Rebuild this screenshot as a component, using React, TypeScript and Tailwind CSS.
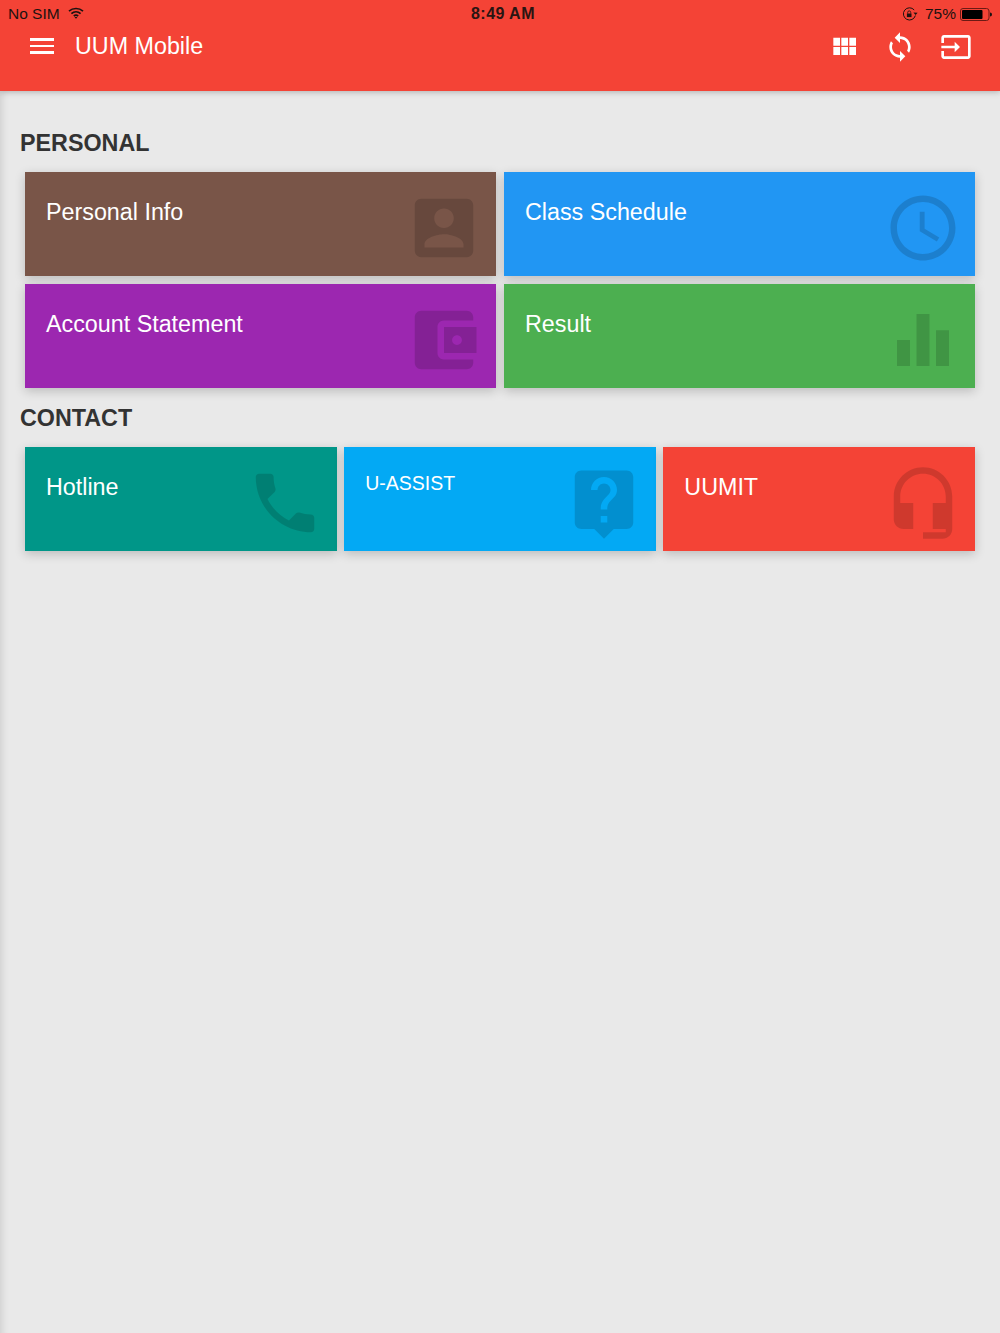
const P = {
  box: "M3 5v14c0 1.1.89 2 2 2h14c1.1 0 2-.9 2-2V5c0-1.1-.9-2-2-2H5c-1.11 0-2 .9-2 2zm12 4c0 1.66-1.34 3-3 3s-3-1.34-3-3 1.34-3 3-3 3 1.34 3 3zm-9 8c0-2 4-3.1 6-3.1s6 1.1 6 3.1v1H6v-1z",
  clock: "M11.99 2C6.47 2 2 6.48 2 12s4.47 10 9.99 10C17.52 22 22 17.52 22 12S17.52 2 11.99 2zM12 20c-4.42 0-8-3.58-8-8s3.58-8 8-8 8 3.58 8 8-3.58 8-8 8zm.5-13H11v6l5.25 3.15.75-1.23-4.5-2.67z",
  wallet: "M21 18v1c0 1.1-.9 2-2 2H5c-1.11 0-2-.9-2-2V5c0-1.1.89-2 2-2h14c1.1 0 2 .9 2 2v1h-9c-1.11 0-2 .9-2 2v8c0 1.1.89 2 2 2h9zm-9-2h10V8H12v8zm4-2.5c-.83 0-1.5-.67-1.5-1.5s.67-1.5 1.5-1.5 1.5.67 1.5 1.5-.67 1.5-1.5 1.5z",
  bars: "M10 20h4V4h-4v16zm-6 0h4v-8H4v8zM16 9v11h4V9h-4z",
  phone: "M6.62 10.79c1.44 2.83 3.76 5.14 6.59 6.59l2.2-2.2c.27-.27.67-.36 1.02-.24 1.12.37 2.33.57 3.57.57.55 0 1 .45 1 1V20c0 .55-.45 1-1 1-9.39 0-17-7.61-17-17 0-.55.45-1 1-1h3.5c.55 0 1 .45 1 1 0 1.25.2 2.45.57 3.57.11.35.03.74-.25 1.02l-2.2 2.2z",
  help: "M19 2H5c-1.11 0-2 .9-2 2v14c0 1.1.89 2 2 2h4l3 3 3-3h4c1.1 0 2-.9 2-2V4c0-1.1-.9-2-2-2zm-6 16h-2v-2h2v2zm2.07-7.75l-.9.92C13.45 11.9 13 12.5 13 14h-2v-.5c0-1.1.45-2.1 1.17-2.83l1.24-1.26c.37-.36.59-.86.59-1.41 0-1.1-.9-2-2-2s-2 .9-2 2H8c0-2.21 1.79-4 4-4s4 1.79 4 4c0 .88-.36 1.68-.93 2.25z",
  headset: "M12 1c-4.97 0-9 4.03-9 9v7c0 1.66 1.34 3 3 3h3v-8H5v-2c0-3.87 3.13-7 7-7s7 3.13 7 7v2h-4v8h4v1h-7v2h6c1.66 0 3-1.34 3-3V10c0-4.97-4.03-9-9-9z",
  apps: "M4 11h5V5H4v6zm0 7h5v-6H4v6zm6 0h5v-6h-5v6zm6 0h5v-6h-5v6zm-6-7h5V5h-5v6zm6-6v6h5V5h-5z",
  sync: "M12 4V1L8 5l4 4V6c3.31 0 6 2.69 6 6 0 1.01-.25 1.97-.7 2.8l1.46 1.46C19.54 15.03 20 13.57 20 12c0-4.42-3.58-8-8-8zm0 14c-3.31 0-6-2.69-6-6 0-1.01.25-1.97.7-2.8L5.24 7.74C4.46 8.97 4 10.43 4 12c0 4.42 3.58 8 8 8v3l4-4-4-4v3z",
  input: "M21 3.01H3c-1.1 0-2 .9-2 2V9h2V4.99h18v14.03H3V15H1v4.01c0 1.1.9 1.98 2 1.98h18c1.1 0 2-.88 2-1.98v-14c0-1.11-.9-2-2-2zM11 16l4-4-4-4v3H1v2h10v3z",
};

function Card({ title, bg, icon, small }: { title: string; bg: string; icon: string; small?: boolean }) {
  return (
    <div className={`${bg} h-[104px] flex justify-between pl-[21px] pr-[13px] shadow-[0_3px_10px_rgba(0,0,0,0.2)]`}>
      <div className={small ? "pt-[22px] text-[19.5px] leading-[28px] text-white" : "pt-[26px] text-[23.3px] leading-[28px] text-white"}>{title}</div>
      <svg viewBox="0 0 24 24" className="w-[78px] h-[78px] mt-[16.5px] shrink-0 fill-black/15"><path d={icon} /></svg>
    </div>
  );
}

function Heading({ children }: { children: string }) {
  return <h2 className="h-[59px] pl-5 pt-[2px] flex items-center text-[23.3px] font-bold text-[#333333]">{children}</h2>;
}

function TopIcon({ d }: { d: string }) {
  return <svg viewBox="0 0 24 24" className="w-8 h-8 fill-white"><path d={d} /></svg>;
}

export default function App() {
  return (
    <div className="min-h-[1333px] bg-[#e9e9e9] font-['Liberation_Sans',Arial,sans-serif] flex flex-col">
      <header className="relative z-10 h-[91px] bg-[#f44336] shadow-[0_1px_6px_rgba(0,0,0,0.25)]">
        <div className="relative h-[27px] flex items-center justify-between pl-2 pr-[8px] pt-[1px] text-[15.5px] text-[#1c1210]">
          <div className="flex items-center gap-2">
            <span>No SIM</span>
            <svg viewBox="0 0 16 12" className="w-4 h-3 -mt-[3px] fill-none stroke-[#1c1210] stroke-[1.7]">
              <path d="M1 4.2C5 .6 11 .6 15 4.2" />
              <path d="M3.4 6.6c2.7-2.3 6.5-2.3 9.2 0" />
              <path d="M5.8 9c1.3-1 3.1-1 4.4 0" />
              <path d="M8 11.8 6.6 10.3c.8-.5 2-.5 2.8 0z" className="fill-[#1c1210] stroke-none" />
            </svg>
          </div>
          <div className="absolute left-[471px] top-[4px] font-bold text-[#2a1512] tracking-[0.45px] text-[16px] leading-[20px]">8:49 AM</div>
          <div className="flex items-center">
            <svg viewBox="0 0 16 14" className="w-4 h-[14px] mr-[7px] fill-none stroke-[#1c1210] stroke-[1]">
              <path d="M13.4 8.5A6.1 6.1 0 1 1 12.2 3" />
              <path d="M11.4 5.6 13.6 8l2-2.3z" className="fill-[#1c1210] stroke-none" />
              <rect x="4.9" y="6.5" width="4.6" height="3.6" className="fill-[#1c1210] stroke-none" />
              <path d="M5.7 6.6V5.4a1.5 1.5 0 0 1 3 0v1.2" strokeWidth="0.8" />
            </svg>
            <span className="mr-[4px]">75%</span>
            <svg viewBox="0 0 32 13" className="w-8 h-[13px]">
              <rect x=".5" y=".5" width="28.5" height="12" rx="2.5" fill="none" stroke="#6b1a14" />
              <rect x="2" y="2" width="20.5" height="9" rx="1" fill="#000" />
              <path d="M30 4.5c1.2 0 2 .8 2 2s-.8 2-2 2z" fill="#1c1210" />
            </svg>
          </div>
        </div>
        <div className="flex justify-between pl-[30px] pr-[28px]">
          <div className="flex items-start">
            <div className="w-6 mt-[11px] flex flex-col gap-[4px]">
              <div className="h-[2.5px] bg-white" />
              <div className="h-[2.5px] bg-white" />
              <div className="h-[2.5px] bg-white" />
            </div>
            <div className="ml-[21px] mt-[5px] text-[23.3px] leading-[28px] text-white">UUM Mobile</div>
          </div>
          <div className="flex gap-6 mt-[4px]">
            <TopIcon d={P.apps} />
            <TopIcon d={P.sync} />
            <TopIcon d={P.input} />
          </div>
        </div>
      </header>
      <main className="flex-1 pt-[22px] px-[25px] shadow-[inset_9px_0_8px_-8px_rgba(0,0,0,0.14)]">
        <div className="-ml-[25px]"><Heading>PERSONAL</Heading></div>
        <div className="grid grid-cols-2 gap-2">
          <Card title="Personal Info" bg="bg-[#795548]" icon={P.box} />
          <Card title="Class Schedule" bg="bg-[#2196f3]" icon={P.clock} />
          <Card title="Account Statement" bg="bg-[#9c27b0]" icon={P.wallet} />
          <Card title="Result" bg="bg-[#4caf50]" icon={P.bars} />
        </div>
        <div className="-ml-[25px]"><Heading>CONTACT</Heading></div>
        <div className="grid grid-cols-3 gap-[7.5px]">
          <Card title="Hotline" bg="bg-[#009688]" icon={P.phone} />
          <Card title="U-ASSIST" bg="bg-[#03a9f4]" icon={P.help} small />
          <Card title="UUMIT" bg="bg-[#f44336]" icon={P.headset} />
        </div>
      </main>
    </div>
  );
}
